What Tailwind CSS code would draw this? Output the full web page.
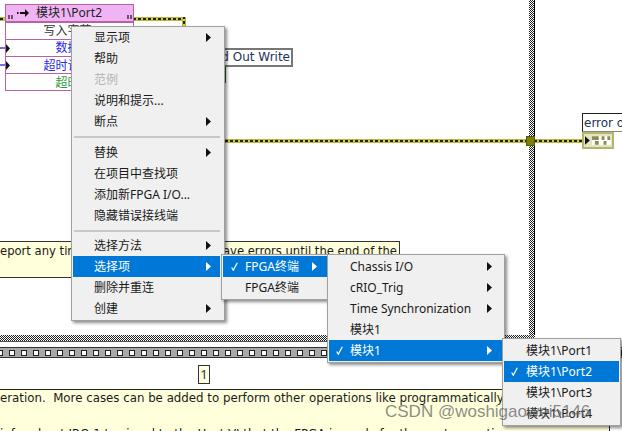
<!DOCTYPE html>
<html lang="en">
<head>
    <meta charset="UTF-8">
    <title>FPGA I/O Method Node</title>
    <script src="https://cdn.jsdelivr.net/npm/@tailwindcss/browser@4"></script>
</head>
<body class="bg-white">
<div class="relative w-[622px] h-[431px] overflow-hidden bg-white text-[12px] text-[#1a1a1a] font-['Noto_Sans','Noto_Sans_CJK_SC',sans-serif]">

    <!-- structure frame -->
    <div class="absolute left-[529px] top-0 w-[6px] h-[335px] border-r border-black bg-[repeating-conic-gradient(#222_0_25%,#fff_0_50%)] bg-[length:2px_2px]"></div>
    <div class="absolute left-0 top-[335px] w-[535px] h-[7px] border-b border-[#555] bg-[repeating-conic-gradient(#222_0_25%,#fff_0_50%)] bg-[length:2px_2px]"></div>

    <!-- film strip -->
    <div id="strip" class="absolute left-0 top-[347px] w-[622px] h-[11px] border-y border-[#333] bg-[#a8a8a8] flex items-center gap-[6px] overflow-hidden"></div>

    <!-- case selector -->
    <div class="absolute left-[198px] top-[365px] w-[12px] h-[19px] border border-[#333] bg-[#ffffe0] flex items-center justify-center text-[13px] leading-none text-[#223355]">1</div>

    <!-- bottom note -->
    <div class="absolute left-0 top-[389px] w-[610px] h-[50px] border-t border-r border-[#222] bg-[#ffffdc] font-['DejaVu_Sans',sans-serif] text-[11.8px] whitespace-nowrap overflow-hidden">
        <div class="leading-[17px]">eration.&nbsp; More cases can be added to perform other operations like programmatically</div>
        <div class="mt-[19px] leading-[17px]">i&nbsp; for about IRQ 1 to signal to the Host VI that the FPGA is ready for the next operation</div>
    </div>

    <!-- upper note -->
    <div class="absolute left-0 top-[241px] w-[400px] h-[37px] border-y border-r border-[#333] bg-[#ffffdc] font-['DejaVu_Sans',sans-serif] text-[11.6px] whitespace-nowrap flex justify-between pr-[2px] leading-[19px]">
        <span>eport any time</span>
        <span>ave errors until the end of the</span>
    </div>

    <!-- wires -->
    <div class="absolute left-0 top-[17px] w-[5px] h-[4px] border-y border-[#b5b54a] bg-[repeating-linear-gradient(90deg,#222_0_3px,#d4d42c_3px_5px)]"></div>
    <div class="absolute left-[133px] top-[17px] w-[52px] h-[4px] border-y border-[#b5b54a] bg-[repeating-linear-gradient(90deg,#222_0_3px,#d4d42c_3px_5px)]"></div>
    <div class="absolute left-[182px] top-[17px] w-[4px] h-[12px] border-x border-[#b5b54a] bg-[repeating-linear-gradient(0deg,#222_0_3px,#d4d42c_3px_5px)]"></div>
    <div class="absolute left-[225px] top-[139px] w-[302px] h-[4px] border-y border-[#b5b54a] bg-[repeating-linear-gradient(90deg,#222_0_3px,#d4d42c_3px_5px)]"></div>
    <div class="absolute left-[534px] top-[139px] w-[48px] h-[4px] border-y border-[#b5b54a] bg-[repeating-linear-gradient(90deg,#222_0_3px,#d4d42c_3px_5px)]"></div>
    <div class="absolute left-[526px] top-[136px] w-[9px] h-[10px] border border-[#55551a] bg-[#808000]"></div>
    <div class="absolute left-0 top-[47px] w-[6px] h-[2px] bg-[#7070f0]"></div>
    <div class="absolute left-0 top-[64px] w-[6px] h-[2px] bg-[#7070f0]"></div>

    <!-- method node -->
    <div class="absolute left-[5px] top-[4px] w-[129px] h-[87px] border border-[#b860a8] flex flex-col">
        <div class="h-[18px] bg-[#f0b4f4] border-b-2 border-[#b860a8] flex items-center relative text-[12px] leading-none pl-[30px] text-[#222]">
            <svg class="absolute left-[2px] top-[9px]" width="6" height="6" viewBox="0 0 6 6"><path d="M1 1v4M4 1v4" stroke="#111" stroke-width="1.2"/></svg>
            <svg class="absolute left-[11px] top-[3px]" width="14" height="10" viewBox="0 0 14 10"><path d="M0 5h1.5M3 5h5" stroke="#111" stroke-width="2"/><path d="M8 1l4 4-4 4z" fill="#111"/></svg>
            <span>模块1\Port2</span>
            <svg class="absolute left-[121px] top-[9px]" width="6" height="6" viewBox="0 0 6 6"><path d="M1 1v4M4 1v4" stroke="#111" stroke-width="1.2"/></svg>
        </div>
        <div class="h-[17px] border-b border-[#b860a8] bg-white flex items-center justify-center pr-[4px] leading-none text-[#333]">写入字节</div>
        <div class="h-[17px] border-b border-[#b860a8] bg-white flex items-center justify-center pr-[4px] leading-none text-[#2a2ae8] relative">
            <svg class="absolute left-[0px] top-[4px]" width="5" height="9" viewBox="0 0 5 9"><path d="M0 0l4 4.5L0 9z" fill="#111"/></svg>数据
        </div>
        <div class="h-[17px] border-b border-[#b860a8] bg-white flex items-center justify-center pr-[4px] pt-[1px] leading-none text-[#2a2ae8] relative">
            <svg class="absolute left-[0px] top-[4px]" width="5" height="9" viewBox="0 0 5 9"><path d="M0 0l4 4.5L0 9z" fill="#111"/></svg>超时计数
        </div>
        <div class="h-[16px] bg-white flex items-center justify-center pr-[4px] pt-[1px] leading-none text-[#2a9a3a]">超时</div>
    </div>

    <!-- label behind the menu -->
    <div class="absolute left-[200px] top-[48px] w-[93px] h-[19px] border-2 border-[#777] bg-white text-[12px] leading-[15px] text-right pr-[1px] font-['DejaVu_Sans',sans-serif] whitespace-nowrap text-[#223355]">d Out Write</div>
    <div class="absolute left-[225px] top-[67px] w-[1px] h-[16px] bg-[#1f5f1f]"></div>

    <!-- error out terminal -->
    <div class="absolute left-[582px] top-[113px] w-[40px] h-[19px] border-t border-l border-b border-[#222] border-b-[#888] bg-white overflow-hidden whitespace-nowrap pl-[1px] leading-[18px] font-['DejaVu_Sans',sans-serif] text-[#223355]">error out</div>
    <div class="absolute left-[582px] top-[132px] w-[32px] h-[17px] border-2 border-[#b5b56a] bg-[#e4e4c4] flex items-center px-[1px] gap-[1px]">
        <svg width="6" height="9" viewBox="0 0 6 9"><path d="M0 0l5 4.5L0 9z" fill="#111"/></svg>
        <svg width="20" height="9" viewBox="0 0 20 9"><rect width="20" height="9" fill="#fff"/><path d="M0 0h7v4H0zM10 0h3v4h-3zM16 0h3v4h-3zM3 5h4v4H3zM12 5h3v4h-3z" fill="#8c8c50"/></svg>
    </div>

    <!-- context menu -->
    <div class="absolute left-[71px] top-[26px] w-[154px] border border-[#a0a0a0] bg-[#f0f0f0] pl-[1px] pr-[4px] pb-[1px] shadow-[2px_2px_3px_rgba(0,0,0,0.45)]">
        <div class="h-[21px] flex items-center justify-between pl-[21px] pr-[9px]">显示项<svg width="5" height="9" viewBox="0 0 5 9"><path d="M0 0l5 4.5L0 9z" fill="#111"/></svg></div>
        <div class="h-[21px] flex items-center pl-[21px]">帮助</div>
        <div class="h-[21px] flex items-center pl-[21px] text-[#b4b4b4]">范例</div>
        <div class="h-[21px] flex items-center pl-[21px]">说明和提示...</div>
        <div class="h-[21px] flex items-center justify-between pl-[21px] pr-[9px]">断点<svg width="5" height="9" viewBox="0 0 5 9"><path d="M0 0l5 4.5L0 9z" fill="#111"/></svg></div>
        <div class="h-[10px] flex items-center pl-[1px]"><div class="w-full h-[2px] bg-[#c8c8c8]"></div></div>
        <div class="h-[21px] flex items-center justify-between pl-[21px] pr-[9px]">替换<svg width="5" height="9" viewBox="0 0 5 9"><path d="M0 0l5 4.5L0 9z" fill="#111"/></svg></div>
        <div class="h-[21px] flex items-center pl-[21px]">在项目中查找项</div>
        <div class="h-[21px] flex items-center pl-[21px]">添加新FPGA I/O...</div>
        <div class="h-[21px] flex items-center pl-[21px]">隐藏错误接线端</div>
        <div class="h-[9px] flex items-center pl-[1px]"><div class="w-full h-[2px] bg-[#c8c8c8]"></div></div>
        <div class="h-[21px] flex items-center justify-between pl-[21px] pr-[9px]">选择方法<svg width="5" height="9" viewBox="0 0 5 9"><path d="M0 0l5 4.5L0 9z" fill="#111"/></svg></div>
        <div class="h-[21px] flex items-center justify-between pl-[21px] pr-[9px] bg-[#0078d7] text-white">选择项<svg width="5" height="9" viewBox="0 0 5 9"><path d="M0 0l5 4.5L0 9z" fill="#fff"/></svg></div>
        <div class="h-[21px] flex items-center pl-[21px]">删除并重连</div>
        <div class="h-[21px] flex items-center justify-between pl-[21px] pr-[9px]">创建<svg width="5" height="9" viewBox="0 0 5 9"><path d="M0 0l5 4.5L0 9z" fill="#111"/></svg></div>
    </div>

    <!-- first submenu -->
    <div class="absolute left-[221px] top-[254px] w-[108px] border border-[#a0a0a0] bg-[#f0f0f0] p-[1px] shadow-[2px_2px_3px_rgba(0,0,0,0.45)]">
        <div class="h-[21px] flex items-center justify-between pl-[8px] pr-[10px] bg-[#0078d7] text-white">
            <span class="flex items-center gap-[7px]"><svg width="7" height="9" viewBox="0 0 7 9"><path d="M0.7 5.5L2.3 8.3L6.3 0.8" fill="none" stroke="#fff" stroke-width="1.2"/></svg>FPGA终端</span>
            <svg width="5" height="9" viewBox="0 0 5 9"><path d="M0 0l5 4.5L0 9z" fill="#fff"/></svg>
        </div>
        <div class="h-[21px] flex items-center pl-[22px]">FPGA终端</div>
    </div>

    <!-- second submenu -->
    <div class="absolute left-[327px] top-[254px] w-[178px] border border-[#a0a0a0] bg-[#f0f0f0] p-[1px] shadow-[2px_2px_3px_rgba(0,0,0,0.45)]">
        <div class="h-[21px] flex items-center justify-between pl-[21px] pr-[11px]">Chassis I/O<svg width="5" height="9" viewBox="0 0 5 9"><path d="M0 0l5 4.5L0 9z" fill="#111"/></svg></div>
        <div class="h-[21px] flex items-center justify-between pl-[21px] pr-[11px]">cRIO_Trig<svg width="5" height="9" viewBox="0 0 5 9"><path d="M0 0l5 4.5L0 9z" fill="#111"/></svg></div>
        <div class="h-[21px] flex items-center justify-between pl-[21px] pr-[11px]">Time Synchronization<svg width="5" height="9" viewBox="0 0 5 9"><path d="M0 0l5 4.5L0 9z" fill="#111"/></svg></div>
        <div class="h-[21px] flex items-center pl-[21px]">模块1</div>
        <div class="h-[21px] flex items-center justify-between pl-[7px] pr-[11px] bg-[#0078d7] text-white">
            <span class="flex items-center gap-[7px]"><svg width="7" height="9" viewBox="0 0 7 9"><path d="M0.7 5.5L2.3 8.3L6.3 0.8" fill="none" stroke="#fff" stroke-width="1.2"/></svg>模块1</span>
            <svg width="5" height="9" viewBox="0 0 5 9"><path d="M0 0l5 4.5L0 9z" fill="#fff"/></svg>
        </div>
    </div>

    <!-- third submenu -->
    <div class="absolute left-[502px] top-[338px] w-[119px] border border-[#a0a0a0] bg-[#f0f0f0] py-[1px] px-[1px] shadow-[2px_2px_3px_rgba(0,0,0,0.45)]">
        <div class="h-[21px] flex items-center pl-[22px]">模块1\Port1</div>
        <div class="h-[21px] flex items-center gap-[8px] pl-[7px] bg-[#0078d7] text-white"><svg width="7" height="9" viewBox="0 0 7 9"><path d="M0.7 5.5L2.3 8.3L6.3 0.8" fill="none" stroke="#fff" stroke-width="1.2"/></svg>模块1\Port2</div>
        <div class="h-[21px] flex items-center pl-[22px]">模块1\Port3</div>
        <div class="h-[21px] flex items-center pl-[22px]">模块1\Port4</div>
    </div>

    <!-- watermark -->
    <div class="absolute left-[385px] top-[402px] text-[17px] leading-[20px] whitespace-nowrap text-[#666666]/75 font-['Liberation_Sans',sans-serif]">CSDN @woshigaowei5146</div>
</div>

<script>
    // sprocket holes of the sequence film strip
    const strip = document.getElementById('strip');
    for (let i = 0; i < 53; i++) {
        const hole = document.createElement('div');
        hole.className = 'shrink-0 w-[6px] h-[6px] border border-[#222] bg-white';
        if (i === 0) hole.style.marginLeft = '-3px';
        strip.appendChild(hole);
    }
</script>
</body>
</html>
